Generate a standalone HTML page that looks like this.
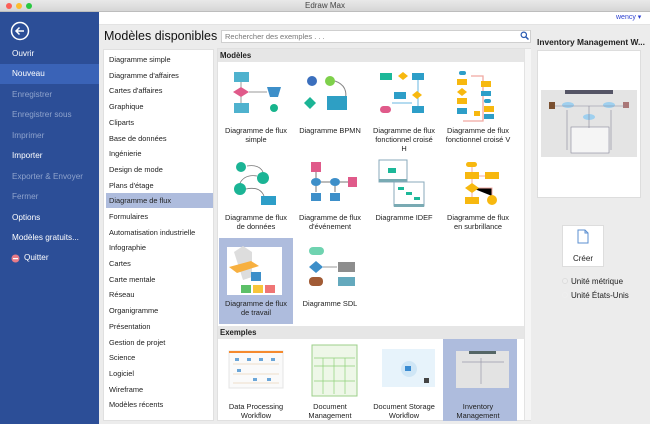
<!DOCTYPE html>
<html><head><meta charset="utf-8"><style>
*{margin:0;padding:0;box-sizing:border-box}
body{width:650px;height:424px;overflow:hidden;font-family:"Liberation Sans",Arial,sans-serif;background:#ececec;position:relative;font-size:8px;color:#222}
.abs{position:absolute}
#tb{left:0;top:0;width:650px;height:12px;background:linear-gradient(#e9e9e9,#d6d6d6);border-bottom:1px solid #bdbdbd;text-align:center;font-size:8px;line-height:12px;color:#444}
.dot{position:absolute;top:3px;width:6px;height:6px;border-radius:50%}
#side{left:0;top:12px;width:99px;height:412px;background:#2c4e97}
#side div.it{position:absolute;left:0;width:99px;height:20px;line-height:20px;padding-left:12px;color:#fff;font-size:8.2px}
#side div.dim{color:#8fa3cc}
.cat{position:absolute;left:2px;width:107px;height:15px;line-height:15px;padding-left:3px;font-size:7.4px;color:#222}
.tile{position:absolute;width:74px;padding:0 5px;text-align:center;font-size:7.4px;line-height:9px;color:#222}
.hdr{position:absolute;left:218px;width:306px;height:13px;background:#e6e6e6;font-weight:bold;font-size:7.8px;line-height:13px;padding-left:2px}
</style></head><body>
<div id="tb" class="abs">Edraw Max
<span class="dot" style="left:6px;background:#fc5f57"></span><span class="dot" style="left:16px;background:#fdbc2e"></span><span class="dot" style="left:26px;background:#28c840"></span></div>
<div id="side" class="abs">
<svg class="abs" style="left:10px;top:9px" width="20" height="20"><circle cx="10" cy="10" r="8.5" fill="none" stroke="#fff" stroke-width="1.5"/><path d="M14 10H6M9.5 6.5L6 10l3.5 3.5" fill="none" stroke="#fff" stroke-width="1.5"/></svg>
<div class="it" style="top:32px">Ouvrir</div>
<div class="it" style="top:52px;background:#3a63b7">Nouveau</div>
<div class="it dim" style="top:73px">Enregistrer</div>
<div class="it dim" style="top:93px">Enregistrer sous</div>
<div class="it dim" style="top:114px">Imprimer</div>
<div class="it" style="top:134px">Importer</div>
<div class="it dim" style="top:155px">Exporter &amp; Envoyer</div>
<div class="it dim" style="top:175px">Fermer</div>
<div class="it" style="top:196px">Options</div>
<div class="it" style="top:216px">Modèles gratuits...</div>
<div class="it" style="top:236px;padding-left:24px">Quitter</div>
<svg class="abs" style="left:11px;top:242px" width="9" height="9"><circle cx="4.5" cy="4.5" r="4" fill="#e87b87"/><rect x="2" y="4" width="5" height="1.2" fill="#fff"/></svg>
</div>
<div class="abs" style="left:99px;top:12px;width:551px;height:13px;background:#fff;border-bottom:1px solid #e3e3e3"></div>
<div class="abs" style="left:616px;top:13px;font-size:7px;color:#2b3fd0">wency ▾</div>
<div class="abs" style="left:104px;top:29px;font-size:12.5px;color:#111">Modèles disponibles</div>
<div class="abs" style="left:221px;top:30px;width:310px;height:13px;border:1px solid #cfcfcf;background:#fff;font-size:7.5px;color:#777;line-height:11px;padding-left:3px">Rechercher des exemples . . .</div>
<svg class="abs" style="left:520px;top:31px" width="9" height="9"><circle cx="3.8" cy="3.8" r="2.7" fill="none" stroke="#2a5ab0" stroke-width="1.2"/><path d="M5.8 5.8L8.5 8.5" stroke="#2a5ab0" stroke-width="1.5"/></svg>
<div class="abs" style="left:103px;top:49px;width:111px;height:372px;border:1px solid #e0e0e0;background:#fff">
<div class="cat" style="top:2px">Diagramme simple</div>
<div class="cat" style="top:18px">Diagramme d'affaires</div>
<div class="cat" style="top:33px">Cartes d'affaires</div>
<div class="cat" style="top:49px">Graphique</div>
<div class="cat" style="top:65px">Cliparts</div>
<div class="cat" style="top:81px">Base de données</div>
<div class="cat" style="top:96px">Ingénierie</div>
<div class="cat" style="top:112px">Design de mode</div>
<div class="cat" style="top:128px">Plans d'étage</div>
<div class="cat" style="top:143px;background:#aebcdd">Diagramme de flux</div>
<div class="cat" style="top:159px">Formulaires</div>
<div class="cat" style="top:175px">Automatisation industrielle</div>
<div class="cat" style="top:190px">Infographie</div>
<div class="cat" style="top:206px">Cartes</div>
<div class="cat" style="top:222px">Carte mentale</div>
<div class="cat" style="top:237px">Réseau</div>
<div class="cat" style="top:253px">Organigramme</div>
<div class="cat" style="top:269px">Présentation</div>
<div class="cat" style="top:285px">Gestion de projet</div>
<div class="cat" style="top:300px">Science</div>
<div class="cat" style="top:316px">Logiciel</div>
<div class="cat" style="top:332px">Wireframe</div>
<div class="cat" style="top:347px">Modèles récents</div>
</div>
<div class="abs" style="left:217px;top:48px;width:314px;height:373px;border:1px solid #e0e0e0;background:#fff"></div>
<div class="abs" style="left:524px;top:49px;width:7px;height:371px;background:#f6f6f6;border-left:1px solid #e3e3e3"></div>
<div class="hdr" style="top:49px">Modèles</div>
<div class="hdr" style="top:326px">Exemples</div>
<div class="abs" style="left:219px;top:238px;width:74px;height:86px;background:#aebcdd"></div>
<div class="abs" style="left:443px;top:339px;width:74px;height:82px;background:#aebcdd"></div>
<svg class="abs" style="left:219px;top:66px" width="300" height="358">
<g><rect x="15" y="6" width="15" height="10" fill="#4fb2ce"/><path d="M22 16v30M30 26h18" stroke="#999" stroke-width="1"/><path d="M14 26l8-5 8 5-8 5z" fill="#e05a8a"/><path d="M48 21h14l-3 10h-8z" fill="#3d8fc9"/><rect x="15" y="37" width="15" height="10" fill="#4fb2ce"/><circle cx="55" cy="42" r="4" fill="#17b48c"/></g>
<g transform="translate(74 0)"><circle cx="19" cy="15" r="5" fill="#3b6fbd"/><circle cx="37" cy="15" r="5" fill="#7ed04b"/><path d="M42 15q14 5 10 20" fill="none" stroke="#888"/><path d="M11 37l6-6 6 6-6 6z" fill="#1bb495"/><rect x="34" y="30" width="20" height="14" fill="#2e9fc4"/></g>
<g transform="translate(148 0)"><rect x="13" y="7" width="12" height="7" fill="#1cb899"/><path d="M31 10l5-4 5 4-5 4z" fill="#f7b80f"/><rect x="45" y="7" width="12" height="7" fill="#2d9ec8"/><path d="M51 14v30M25 37h20" stroke="#68b7e0"/><rect x="27" y="26" width="12" height="7" fill="#2d9ec8"/><path d="M45 29l5-4 5 4-5 4z" fill="#f7b80f"/><rect x="13" y="40" width="11" height="7" rx="3.5" fill="#e05a8a"/><rect x="45" y="40" width="12" height="7" fill="#2d9ec8"/></g>
<g transform="translate(222 0)"><rect x="18" y="5" width="7" height="4" rx="2" fill="#2d9ec8"/><rect x="16" y="13" width="10" height="6" fill="#f7b80f"/><path d="M16 26l5-4 5 4-5 4z" fill="#f7b80f"/><rect x="16" y="32" width="10" height="6" fill="#f7b80f"/><rect x="16" y="42" width="10" height="6" fill="#2d9ec8"/><path d="M30 10h12v45H22" fill="none" stroke="#f0a8a0" stroke-width="1.3"/><rect x="40" y="15" width="10" height="6" fill="#f7b80f"/><rect x="40" y="25" width="10" height="5" fill="#2d9ec8"/><rect x="43" y="33" width="7" height="4" rx="2" fill="#2d9ec8"/><rect x="43" y="40" width="10" height="6" fill="#f7b80f"/><rect x="33" y="45" width="6" height="5" fill="#f7b80f"/><rect x="43" y="48" width="10" height="5" fill="#2d9ec8"/></g>
<g transform="translate(0 94)"><circle cx="22" cy="7" r="5" fill="#1bb495"/><circle cx="44" cy="18" r="6" fill="#1bb495"/><circle cx="21" cy="29" r="6" fill="#1bb495"/><rect x="42" y="36" width="15" height="9" fill="#2d9ec8"/><path d="M28 6q12-2 16 6M38 16q-12-2-17 7M27 29q14-3 18 7" fill="none" stroke="#777" stroke-width=".8"/></g>
<g transform="translate(74 94)"><rect x="18" y="2" width="10" height="10" fill="#e05a8a"/><ellipse cx="23" cy="22" rx="5" ry="4" fill="#3d8fc9"/><ellipse cx="42" cy="22" rx="5" ry="4" fill="#3d8fc9"/><path d="M28 22h9M47 22h8M23 26v6M42 26v6M23 12v6" stroke="#777"/><rect x="55" y="17" width="9" height="10" fill="#e05a8a"/><rect x="18" y="33" width="10" height="8" fill="#3d8fc9"/><rect x="37" y="33" width="10" height="8" fill="#3d8fc9"/></g>
<g transform="translate(148 94)"><rect x="12" y="0" width="28" height="22" fill="#fff" stroke="#8ab"/><rect x="12" y="19" width="28" height="3" fill="#79aab3"/><rect x="21" y="8" width="8" height="5" fill="#1cb899"/><rect x="27" y="22" width="30" height="24" fill="#fff" stroke="#8ab"/><rect x="27" y="44" width="30" height="3" fill="#79aab3"/><rect x="31" y="27" width="6" height="3" fill="#1cb899"/><rect x="39" y="32" width="6" height="3" fill="#1cb899"/><rect x="47" y="37" width="6" height="3" fill="#1cb899"/></g>
<g transform="translate(222 94)"><rect x="25" y="2" width="11" height="5" rx="2.5" fill="#f7b80f"/><path d="M31 7v37M31 16h20M31 28h20v8" stroke="#f0a8a0"/><rect x="24" y="12" width="14" height="7" fill="#f7b80f"/><rect x="44" y="12" width="14" height="7" fill="#f7b80f"/><path d="M24 28l7-5 7 5-7 5z" fill="#f7b80f"/><rect x="24" y="37" width="14" height="7" fill="#f7b80f"/><circle cx="51" cy="40" r="5" fill="#f7b80f"/></g>
<g transform="translate(0 176)"><rect x="8" y="5" width="55" height="48" fill="#fff"/><path d="M15 10l9-6 9 6 0 25-9 3z" fill="#ddd"/><path d="M10 25l22-6 8 5-22 7z" fill="#f7b040"/><rect x="32" y="30" width="10" height="9" fill="#3d8fc9"/><rect x="22" y="43" width="10" height="8" fill="#5cc068"/><rect x="34" y="43" width="10" height="8" fill="#f7c53a"/><rect x="46" y="43" width="10" height="8" fill="#ef7575"/></g>
<g transform="translate(74 176)"><rect x="16" y="5" width="15" height="8" rx="4" fill="#6fd3b0"/><path d="M16 25l7-6 7 6-7 6z" fill="#3d8fc9"/><rect x="16" y="35" width="14" height="9" rx="4" fill="#a15b35"/><path d="M30 25h14" stroke="#999"/><rect x="45" y="20" width="17" height="10" fill="#8d8d8d"/><path d="M45 35h17v9h-17z" fill="#64a9bd"/></g>
<rect x="10" y="285" width="54" height="37" fill="#fafafa" stroke="#e4e4e4"/><rect x="10" y="285" width="54" height="2" fill="#f58a2e"/>
<g fill="#6ba6d8"><rect x="16" y="292" width="4" height="3"/><rect x="28" y="292" width="4" height="3"/><rect x="40" y="292" width="4" height="3"/><rect x="52" y="292" width="4" height="3"/><rect x="18" y="303" width="4" height="3"/><rect x="34" y="312" width="4" height="3"/><rect x="48" y="312" width="4" height="3"/></g>
<path d="M14 298h46M14 308h46M14 317h46" stroke="#e3c39a" stroke-width=".6"/>
<rect x="93" y="279" width="45" height="51" fill="#eef7e8" stroke="#9ccf8a"/><path d="M95 292h41M104 292v36M115 292v36M126 292v36M95 300h41M95 315h41" stroke="#8fd07a" stroke-width=".7"/>
<rect x="163" y="283" width="53" height="38" fill="#e7f3fb"/><circle cx="190" cy="303" r="8" fill="#cfe6f6"/><rect x="186" y="300" width="6" height="5" fill="#3a8bd1"/><rect x="205" y="312" width="5" height="5" fill="#444"/>
<rect x="237" y="285" width="53" height="37" fill="#e3e3e3"/><rect x="250" y="285" width="27" height="3" fill="#566"/><path d="M243 296h42M262 292v26" stroke="#99a" stroke-width=".7"/>
</svg>
<div class="tile" style="left:219px;top:126px">Diagramme de flux simple</div>
<div class="tile" style="left:293px;top:126px">Diagramme BPMN</div>
<div class="tile" style="left:367px;top:126px">Diagramme de flux fonctionnel croisé H</div>
<div class="tile" style="left:441px;top:126px;padding:0">Diagramme de flux fonctionnel croisé V</div>
<div class="tile" style="left:219px;top:213px">Diagramme de flux de données</div>
<div class="tile" style="left:293px;top:213px">Diagramme de flux d'événement</div>
<div class="tile" style="left:367px;top:213px">Diagramme IDEF</div>
<div class="tile" style="left:441px;top:213px">Diagramme de flux en surbrillance</div>
<div class="tile" style="left:219px;top:299px">Diagramme de flux de travail</div>
<div class="tile" style="left:293px;top:299px">Diagramme SDL</div>
<div class="tile" style="left:219px;top:402px">Data Processing Workflow</div>
<div class="tile" style="left:293px;top:402px;height:18px;overflow:hidden">Document Management Workflow</div>
<div class="tile" style="left:367px;top:402px;padding:0">Document Storage Workflow</div>
<div class="tile" style="left:441px;top:402px;height:18px;overflow:hidden">Inventory Management Workflow</div>
<div class="abs" style="left:537px;top:37px;font-size:8.4px;font-weight:bold">Inventory Management W...</div>
<div class="abs" style="left:537px;top:50px;width:104px;height:148px;border:1px solid #ddd;background:#fff"></div>
<svg class="abs" style="left:541px;top:90px" width="96" height="67"><rect width="96" height="67" fill="#e4e4e4"/><rect x="24" y="0" width="48" height="4" fill="#556"/><rect x="8" y="12" width="6" height="7" fill="#7a5030"/><rect x="82" y="12" width="6" height="6" fill="#a77"/><ellipse cx="27" cy="15" rx="6" ry="3" fill="#9fd0ef"/><ellipse cx="68" cy="15" rx="6" ry="3" fill="#9fd0ef"/><ellipse cx="48" cy="27" rx="6" ry="3" fill="#9fd0ef"/><rect x="30" y="37" width="38" height="26" fill="#f5f5f5" stroke="#889" stroke-width=".6"/><path d="M14 16h70M48 16v22M26 20v40M70 20v40" stroke="#889" stroke-width=".6"/></svg>
<div class="abs" style="left:562px;top:225px;width:42px;height:42px;border:1px solid #ddd;background:#fff;font-size:8px;text-align:center;padding-top:28px">Créer</div>
<svg class="abs" style="left:577px;top:229px" width="12" height="15"><path d="M1 1h7l3 3v10H1z" fill="#fff" stroke="#5b8fd0"/><path d="M8 1v3h3" fill="none" stroke="#5b8fd0"/></svg>
<div class="abs" style="left:562px;top:277px;font-size:8px"><span style="display:inline-block;width:6px;height:6px;border-radius:50%;border:1px solid #ddd;background:#eee;margin-right:3px"></span>Unité métrique</div>
<div class="abs" style="left:562px;top:291px;font-size:8px"><span style="display:inline-block;width:6px;height:6px;border-radius:50%;border:1px solid #eee;margin-right:3px"></span>Unité États-Unis</div>
</body></html>
